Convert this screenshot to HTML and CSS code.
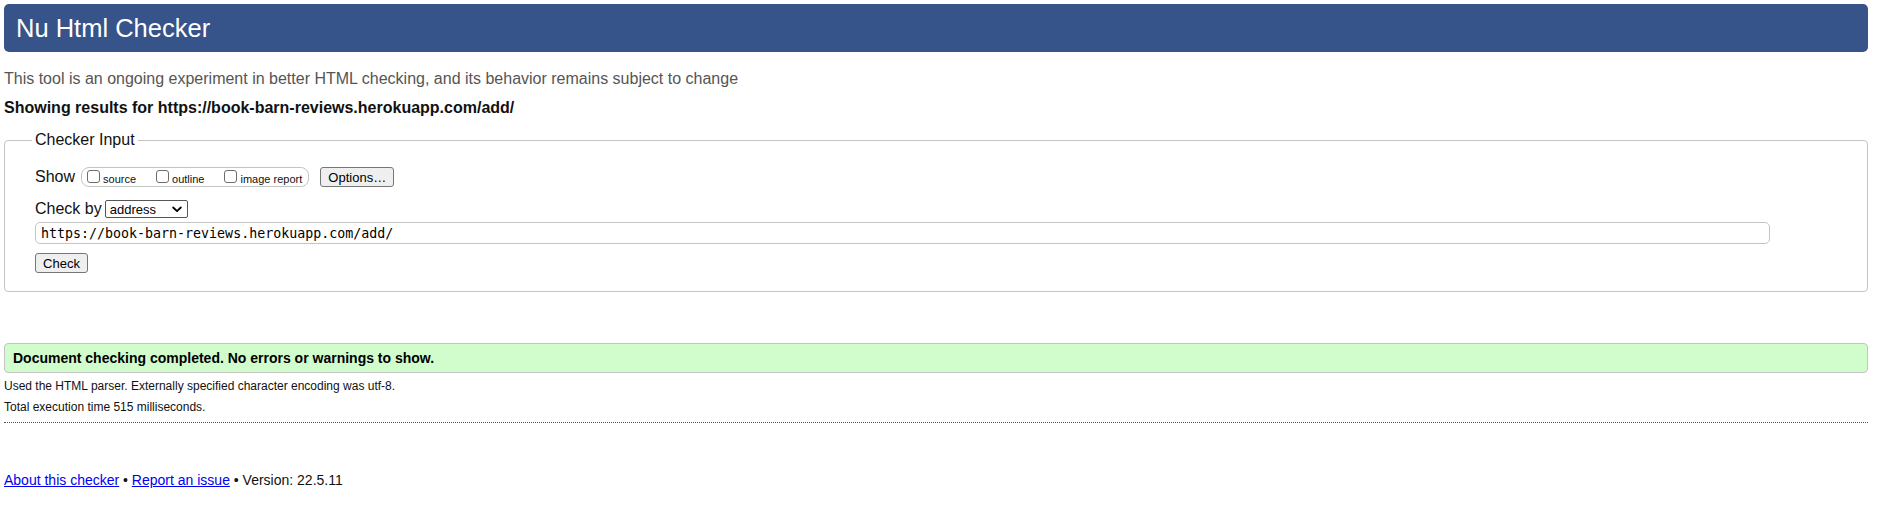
FILE: index.html
```html
<!DOCTYPE html>
<html lang="en">
<head>
<meta charset="utf-8">
<title>Nu Html Checker</title>
<link rel="stylesheet" href="styles.css">
</head>
<body>
<h1 class="title">Nu Html Checker</h1>
<p class="intro">This tool is an ongoing experiment in better HTML checking, and its behavior remains subject to change</p>
<p class="results-for">Showing results for https://book-barn-reviews.herokuapp.com/add/</p>
<form class="checker">
  <fieldset class="checker-input">
    <legend class="legend">Checker Input</legend>
    <div class="row row-show">
      <span class="lbl">Show</span>
      <span class="show-group">
        <label class="opt"><input class="cb" type="checkbox">source</label>
        <label class="opt"><input class="cb" type="checkbox">outline</label>
        <label class="opt"><input class="cb" type="checkbox">image report</label>
      </span>
      <button class="btn btn-options" type="button">Options…</button>
    </div>
    <div class="row row-by">
      <span class="lbl">Check by</span>
      <span class="select-wrap">
        <select class="sel"><option>address</option></select>
        <svg class="chev" width="10" height="7" viewBox="0 0 10 7"><path d="M1.2 1.5 L5 5.2 L8.8 1.5" fill="none" stroke="#000" stroke-width="1.8" stroke-linecap="round" stroke-linejoin="round"/></svg>
      </span>
    </div>
    <div class="row row-url">
      <input class="url" type="text" value="https://book-barn-reviews.herokuapp.com/add/">
    </div>
    <div class="row row-submit">
      <button class="btn btn-check" type="button">Check</button>
    </div>
  </fieldset>
</form>
<div class="success">Document checking completed. No errors or warnings to show.</div>
<p class="details">Used the HTML parser. Externally specified character encoding was utf-8.</p>
<p class="details">Total execution time 515 milliseconds.</p>
<hr class="sep">
<p class="footer"><a class="link" href="#">About this checker</a> • <a class="link" href="#">Report an issue</a> • Version: 22.5.11</p>
</body>
</html>
```
FILE: styles.css
```css
html, body {
  background: #fff;
}
body {
  margin: 0;
  padding: 4px 10px 0 4px;
  font-family: "Liberation Sans", Arial, Helvetica, sans-serif;
  color: #000;
}
.title {
  margin: 0;
  height: 48px;
  padding-left: 12px;
  background: #36538a;
  color: #fff;
  border-radius: 5px;
  font-size: 25.5px;
  font-weight: normal;
  line-height: 48px;
}
.intro {
  margin: 17px 0 0;
  font-size: 16px;
  line-height: 20px;
  color: #555;
}
.results-for {
  margin: 9px 0 0;
  font-size: 16px;
  line-height: 20px;
  font-weight: bold;
  color: #111;
}
.checker {
  margin: 13px 0 0;
}
.checker-input {
  margin: 0;
  padding: 18px 97px 18px 30px;
  border: 1px solid #c4c4c4;
  border-radius: 4px;
  min-width: 0;
}
.legend {
  margin-left: -3px;
  padding: 0 3px;
  font-size: 16px;
  line-height: 18px;
  color: #111;
}
.row {
  display: flex;
  align-items: center;
}
.row-show {
  height: 20px;
}
.row-by {
  margin-top: 13px;
  height: 18px;
}
.row-url {
  margin-top: 4px;
  height: 22px;
}
.row-submit {
  margin-top: 9px;
  height: 20px;
}
.lbl {
  font-size: 16px;
  color: #111;
}
.show-group {
  display: flex;
  align-items: center;
  gap: 20px;
  height: 20px;
  box-sizing: border-box;
  margin-left: 6px;
  padding: 0 6px 0 5px;
  border: 1px solid #c4c4c4;
  border-radius: 8px;
}
.opt {
  display: flex;
  align-items: baseline;
  font-size: 11px;
  color: #111;
}
.cb {
  appearance: none;
  -webkit-appearance: none;
  width: 13px;
  height: 13px;
  margin: 0 3px 0 0;
  border: 1px solid #6e6e6e;
  border-radius: 3px;
  background: #fff;
  box-sizing: border-box;
}
.btn {
  height: 20px;
  box-sizing: border-box;
  padding: 0 6px;
  border: 1px solid #767676;
  border-radius: 3px;
  background: #efefef;
  font-family: "Liberation Sans", Arial, sans-serif;
  font-size: 13px;
  color: #000;
}
.btn-options {
  margin-left: 11px;
  width: 74px;
}
.btn-check {
  width: 53px;
}
.select-wrap {
  position: relative;
  margin-left: 3px;
  display: flex;
}
.sel {
  appearance: none;
  -webkit-appearance: none;
  width: 83px;
  height: 18px;
  box-sizing: border-box;
  padding: 0 0 0 4px;
  border: 1px solid #555;
  border-radius: 2px;
  background: #fff;
  font-family: "Liberation Sans", Arial, sans-serif;
  font-size: 13px;
  color: #000;
}
.chev {
  position: absolute;
  right: 6px;
  top: 6px;
  pointer-events: none;
}
.url {
  width: 100%;
  height: 22px;
  box-sizing: border-box;
  padding: 0 5px;
  border: 1px solid #c4c4c4;
  border-radius: 5px;
  font-family: "DejaVu Sans Mono", "Liberation Mono", monospace;
  font-size: 13.3px;
  color: #000;
}
.success {
  margin-top: 51px;
  height: 30px;
  box-sizing: border-box;
  padding-left: 8px;
  border: 1px solid #c4c4c4;
  border-radius: 4px;
  background: #d1fdcc;
  font-size: 14px;
  font-weight: bold;
  line-height: 28px;
  color: #000;
}
.details {
  margin: 5px 0;
  font-size: 12px;
  line-height: 16px;
  color: #111;
}
.sep {
  margin: 7px 0 0;
  height: 0;
  border: 0;
  border-top: 1px dotted #555;
}
.footer {
  margin: 48px 0 0;
  font-size: 14px;
  line-height: 18px;
  color: #111;
}
.link {
  color: #0000ee;
  text-decoration: underline;
}
```
